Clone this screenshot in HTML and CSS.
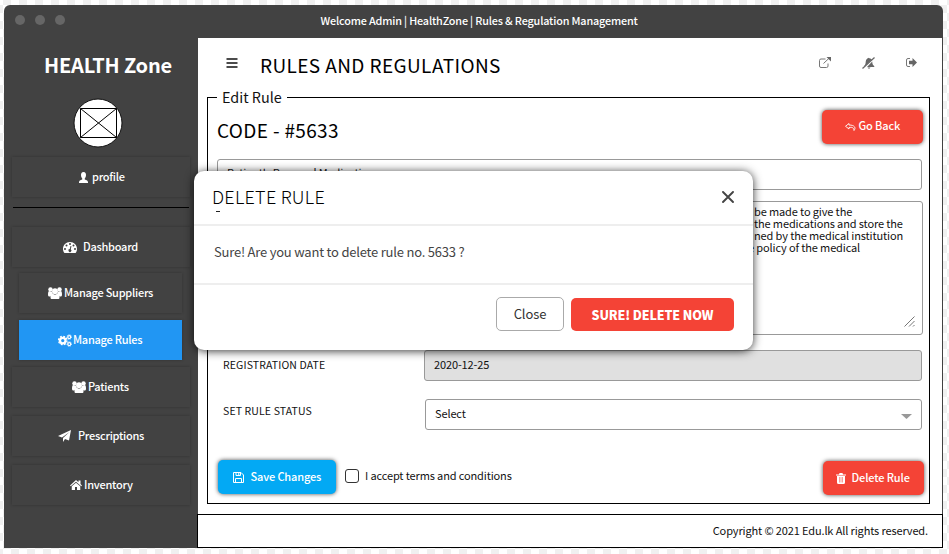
FILE: index.html
```html
<!DOCTYPE html>
<html lang="en">
<head>
<meta charset="utf-8">
<title>Rules &amp; Regulation Management</title>
<link rel="stylesheet" href="styles.css">
</head>
<body>
<svg class="defs" width="0" height="0">
  <symbol id="users" viewBox="0 0 28 24"><circle cx="5" cy="5" r="4.500"/><circle cx="23" cy="5" r="4.500"/><path d="M0 15c0-5 1-7 3-7 2 2 5 2 6 1-1 4 1 6 2 7-3 0-5 1-6 3H3c-2 0-3-1-3-4zM28 15c0-5-1-7-3-7-2 2-5 2-6 1 1 4-1 6-2 7 3 0 5 1 6 3h2c2 0 3-1 3-4z"/><circle cx="14" cy="8.500" r="5.800"/><path d="M5 21c0-6 2-8 4-8 3 3 7 3 10 0 3 0 4 3 4 8 0 2-1 3-3 3H8c-2 0-3-1-3-3z"/></symbol>
</svg>
<div class="window">
  <header class="titlebar">
    <div class="dots"><i></i><i></i><i></i></div>
    <span class="title">Welcome Admin | HealthZone | Rules &amp; Regulation Management</span>
  </header>
  <div class="shell">
    <nav class="sidebar">
      <h1 class="brand">HEALTH Zone</h1>
      <svg class="avatar" viewBox="0 0 50 50"><circle cx="25" cy="25" r="24" fill="#fff" stroke="#111"/><path d="M7.500 10.500h36v29h-36zM7.500 10.500l36 29M43.500 10.500l-36 29" fill="none" stroke="#000"/></svg>
      <a class="item profile"><svg class="ic" width="9" height="11" viewBox="0 0 18 22"><path d="M9 0c4 0 5 3 5 6s-1 5-2.500 7v2c4 1 6.500 2 6.500 6v1H0v-1c0-4 2.500-5 6.500-6v-2C5 11 4 9 4 6s1-6 5-6z"/></svg><span>profile</span></a>
      <hr class="rule">
      <a class="item dash"><svg class="ic" width="14" height="11" viewBox="0 0 28 22"><path fill-rule="evenodd" d="M14 0C6 0 0 6 0 14c0 3 1 5 2 7l1 1h22l1-1c1-2 2-4 2-7C28 6 22 0 14 0zM4 12a2 2 0 1 1 0 4 2 2 0 0 1 0-4zM7 5a2 2 0 1 1 0 4 2 2 0 0 1 0-4zM14 2a2 2 0 1 1 0 4 2 2 0 0 1 0-4zM21 5a2 2 0 1 1 0 4 2 2 0 0 1 0-4zM24 12a2 2 0 1 1 0 4 2 2 0 0 1 0-4zM15 8l2 .5-1.500 6a3 3 0 1 1-2-.5z"/></svg><span>Dashboard</span></a>
      <a class="item narrow sup"><svg class="ic" width="14" height="12"><use href="#users"/></svg><span>Manage Suppliers</span></a>
      <a class="item narrow active"><svg class="ic" width="14" height="13" viewBox="0 0 28 26"><circle cx="9.500" cy="13" r="5.500" fill="none" stroke="#fff" stroke-width="4.500"/><circle cx="9.500" cy="13" r="8.500" fill="none" stroke="#fff" stroke-width="2.500" stroke-dasharray="3.700 2.970"/><circle cx="22.500" cy="6" r="3" fill="none" stroke="#fff" stroke-width="2.500"/><circle cx="22.500" cy="6" r="4.700" fill="none" stroke="#fff" stroke-width="1.500" stroke-dasharray="2 1.690"/><circle cx="22.500" cy="20" r="3" fill="none" stroke="#fff" stroke-width="2.500"/><circle cx="22.500" cy="20" r="4.700" fill="none" stroke="#fff" stroke-width="1.500" stroke-dasharray="2 1.690"/></svg><span>Manage Rules</span></a>
      <a class="item pat"><svg class="ic" width="14" height="12"><use href="#users"/></svg><span>Patients</span></a>
      <a class="item pre"><svg class="ic" width="13" height="12" viewBox="0 0 26 24"><path d="M26 0L22 21l-8-3-4 6v-8L23 4 8 15 0 12z"/></svg><span>Prescriptions</span></a>
      <a class="item inv"><svg class="ic" width="12" height="10" viewBox="0 0 24 20"><path d="M12 0l5 4.500V1h4v7l3 3-1.500 1.500L12 3.500 1.500 12.500 0 11zM12 5.500l8.500 7.200V20H14v-6h-4v6H3.500v-7.300z"/></svg><span>Inventory</span></a>
    </nav>
    <main class="main">
      <div class="topbar">
        <svg class="burger" width="12" height="10" viewBox="0 0 12 10"><path d="M.5 1h11M.5 5h11M.5 9h11" stroke="#111" stroke-width="1.700"/></svg>
        <h2 class="page-title">RULES AND REGULATIONS</h2>
        <div class="tools">
          <svg width="12" height="11" viewBox="0 0 24 22" fill="none" stroke="#777" stroke-width="2"><path d="M13 4H4Q1 4 1 7v11q0 3 3 3h11q3 0 3-3v-5M9 13L20 2.500"/><path d="M15 0h9v9z" fill="#666" stroke="none"/></svg>
          <svg width="13" height="12" viewBox="0 0 26 24" fill="#666"><path d="M4 18c3-2 3-5 3.500-9C8 5 10 3 12 2.500 12 1 14 1 14 2.500c3 0 4.500 1 5.500 3L6 18zM20.500 9c0 4 1 7 4 9v2H10zM11 21h6c-1 3-5 3-6 0z"/><path d="M25 1L1 23" stroke="#666" stroke-width="2.500"/></svg>
          <svg width="11" height="9" viewBox="0 0 22 18"><path d="M8 1H4Q1 1 1 4v10q0 3 3 3h4" fill="none" stroke="#777" stroke-width="2"/><path d="M6 5.500h7V0l9 9-9 9v-5.500H6z" fill="#666"/></svg>
        </div>
      </div>
      <section class="panel">
        <span class="legend">Edit Rule</span>
        <div class="code-row">
          <h3 class="code">CODE - #5633</h3>
          <button class="btn red back"><svg width="11" height="8" viewBox="0 0 22 16" fill="none" stroke="#fff" stroke-width="1.800"><path d="M8 1L1 6.500 8 12V9c7-1 9 0 10 6 4-5 2-11-10-11z"/></svg><span>Go Back</span></button>
        </div>
        <div class="field name"><span>Patient's Personal Medication</span></div>
        <div class="field area">
          <p>be made to give the</p><p>the medications and store the</p><p>ned by the medical institution</p><p class="wide">e policy of the medical</p>
          <svg class="grip" width="11" height="11" viewBox="0 0 11 11"><path d="M.5 10.500l10-10M5 10.500l5.500-5.500M9 10.500l1.500-1.500" stroke="#777"/></svg>
        </div>
        <div class="row date"><label>REGISTRATION DATE</label><div class="field grey"><span>2020-12-25</span></div></div>
        <div class="row status"><label>SET RULE STATUS</label><div class="field select"><span>Select</span><svg width="11" height="5" viewBox="0 0 11 5"><path d="M0 0h11L5.500 5z" fill="#999"/></svg></div></div>
        <div class="actions">
          <button class="btn blue"><svg width="11" height="11" viewBox="0 0 22 22" fill="none" stroke="#fff" stroke-width="2"><path d="M1 1h15l5 5v15H1zM5 21v-8h12v8M6 1v6h9V1M11.500 2v4"/></svg><span>Save Changes</span></button>
          <i class="check"></i><span class="terms">I accept terms and conditions</span>
          <button class="btn red del"><svg width="10" height="11" viewBox="0 0 20 22"><path fill="#fff" fill-rule="evenodd" d="M0 3h6l1-3h6l1 3h6v2H0zM2 6h16v13q0 3-3 3H5q-3 0-3-3zM6 8v11h1V8zM9.500 8v11h1V8zM13 8v11h1V8z"/></svg><span>Delete Rule</span></button>
        </div>
      </section>
      <footer class="footer"><span>Copyright © 2021 Edu.lk All rights reserved.</span></footer>
    </main>
  </div>
</div>
<div class="modal">
  <div class="mhead"><div class="mtitle"><h4>DELETE RULE</h4><i class="dash-mark"></i></div><svg width="12" height="12" viewBox="0 0 12 12"><path d="M1 1l10 10M11 1L1 11" stroke="#444" stroke-width="1.900" stroke-linecap="round"/></svg></div>
  <div class="mbody"><span>Sure! Are you want to delete rule no. 5633 ?</span></div>
  <div class="mfoot"><button class="close"><span>Close</span></button><button class="sure"><span>SURE! DELETE NOW</span></button></div>
</div>
</body>
</html>
```
FILE: styles.css
```css
* { box-sizing: border-box; }
body {
  margin: 0; width: 949px; height: 554px; padding: 5px 0 0 4px; overflow: hidden; position: relative;
  font-family: "Noto Sans CJK SC", sans-serif; font-size: 11px; line-height: 16px; color: #111;
  letter-spacing: -.13px;
  background: conic-gradient(#f0f0f0 25%, #fff 0 50%, #f0f0f0 0 75%, #fff 0) 3px 5px / 16px 16px;
}
.defs { position: absolute; }
h1, h2, h3, h4, p { margin: 0; font-weight: 400; }
span, h1, h2, h3, h4, label, p { white-space: nowrap; }
button { font: inherit; letter-spacing: inherit; border: 0; padding: 0; }
svg { display: block; flex: none; }
.window { width: 939px; height: 543px; border-radius: 6px 6px 0 0; overflow: hidden; background: #424242; }
.titlebar { height: 33px; display: flex; align-items: center; color: #fff; font-weight: 500; }
.dots { display: flex; gap: 10px; padding: 0 0 3px 11px; width: 316.500px; }
.dots i { width: 10px; height: 10px; border-radius: 50%; background: #666; }
.titlebar .title { font-size: 10.800px; letter-spacing: -.15px; padding-bottom: 4px; }
.shell { display: flex; height: 510px; }
.sidebar { width: 194px; padding: 12px 0 0 8px; color: #fff; display: flex; flex-direction: column; }
.brand { font-size: 20px; line-height: 30px; font-weight: 700; padding-left: 32px; letter-spacing: -.2px; }
.avatar { width: 50px; height: 50px; margin: 18px 0 9px 61.400px; }
.item { height: 40px; width: 178px; flex: none; display: flex; align-items: center; gap: 4px; font-weight: 500; letter-spacing: -.26px; box-shadow: 0 0 3px rgba(0,0,0,.25); background: #424242; }
.item span, .btn span { padding-bottom: 3px; }
.ic { fill: #fff; }
.narrow { width: 163px; margin-left: 7px; }
.profile { padding-left: 67px; }
.rule { width: 176px; height: 1px; background: #000; border: 0; margin: 10px 0 19px 1px; flex: none; }
.dash { padding-left: 51px; gap: 6px; }
.sup { margin-top: 6px; padding-left: 29px; gap: 2px; }
.active { margin-top: 7px; padding-left: 39px; gap: 1px; background: #2196f3; }
.pat { margin-top: 7px; padding-left: 60px; gap: 2px; }
.pre { margin-top: 9px; padding-left: 46px; gap: 7px; }
.inv { margin-top: 9px; padding-left: 58px; gap: 2px; }
.main { width: 745px; background: #fff; border-right: 1px solid #424242; display: flex; flex-direction: column; }
.topbar { height: 59px; display: flex; align-items: center; padding: 0 25px 3px 28px; }
.topbar .burger { margin-top: -7px; }
.page-title { font-size: 19px; line-height: 28px; margin: -2px 0 0 22px; letter-spacing: .4px; color: #000; }
.tools { margin-left: auto; display: flex; align-items: center; gap: 31px; margin-top: -7px; }
.panel { position: relative; border: 1px solid #000; margin-left: 9px; width: 723px; height: 407px; padding: 11px 7px 0 9px; }
.legend { position: absolute; left: 9px; top: -11px; background: #fff; padding: 0 5px; font-size: 14.400px; line-height: 20px; letter-spacing: 0; }
.code-row { display: flex; justify-content: space-between; height: 34px; }
.code { font-size: 19px; line-height: 42px; letter-spacing: .35px; color: #000; }
.btn { display: flex; align-items: center; color: #fff; font-weight: 500; border-radius: 5px; box-shadow: 0 0 4px rgba(0,0,0,.7); height: 34px; }
.red { background: #f44336; }
.blue { background: #03a9f4; width: 118px; padding-left: 15px; gap: 7px; letter-spacing: -.15px; }
.back { width: 101px; padding-left: 23px; gap: 3px; }
.code-row .back { position: relative; left: .5px; top: .5px; }
.field { border: 1px solid #999; border-radius: 3px; background: #fff; }
.name { width: 705px; height: 31px; margin-top: 16px; padding: 4px 9px; }
.area { width: 706px; height: 134px; margin-top: 11px; position: relative; padding: 3px 0 0 536px; line-height: 12px; }
.area p { height: 12px; }
.area .wide { margin-left: -6px; }
.grip { position: absolute; right: 7px; bottom: 7px; }
.row { display: flex; padding-left: 6px; }
.row label { width: 201px; font-size: 10.500px; padding-top: 7px; letter-spacing: .12px; }
.row .field { width: 498px; height: 31px; padding: 5px 9px; }
.date { margin-top: 15px; }
.grey { background: #e0e0e0; }
.status { margin-top: 18px; }
.row.status label { width: 202px; padding-top: 4px; }
.row .select { width: 497px; display: flex; justify-content: space-between; align-items: center; }
.select span { padding-bottom: 3px; }
.select svg { margin-top: 4px; }
.actions { display: flex; margin-top: 29px; align-items: center; }
.check { width: 14px; height: 14px; border: 1.500px solid #333; border-radius: 3px; margin: -2px 6px 0 10px; }
.actions .blue { position: relative; left: .5px; }
.terms { padding-bottom: 4px; }
.del { margin: 2px 0 0 auto; width: 101px; padding-left: 13px; gap: 6px; }
.actions .red { position: relative; left: 1.500px; }
.footer { margin: auto -1px 0; height: 34px; border: 1px solid #000; display: flex; align-items: center; justify-content: flex-end; padding: 0 14px 2px 0; }
.modal { position: absolute; left: 194px; top: 171px; width: 559px; height: 179px; background: #fff; border-radius: 10px; box-shadow: 0 1px 10px rgba(0,0,0,.8); }
.mhead { height: 55px; border-bottom: 2px solid #eee; display: flex; justify-content: space-between; padding: 12px 19px 0 18px; }
.mhead svg { margin-top: 8px; }
.mtitle h4 { font-size: 18px; line-height: 26px; font-weight: 300; letter-spacing: .25px; color: #000; }
.dash-mark { display: block; width: 4px; height: 1px; background: #222; margin: 2px 0 0 4px; }
.mbody { height: 59px; border-bottom: 2px solid #eee; padding: 17px 20px; font-size: 13px; line-height: 18px; color: #444; letter-spacing: -.21px; }
.mfoot { display: flex; justify-content: flex-end; gap: 7px; padding: 12px 19px 0 0; }
.close { width: 68px; height: 34px; border: 1px solid #aaa; border-radius: 5px; background: #fff; font-size: 13px; color: #333; letter-spacing: -.1px; }
.sure { width: 163px; height: 33px; border-radius: 5px; background: #f44336; color: #fff; font-weight: 900; font-size: 12.500px; letter-spacing: -.15px; margin-top: 1px; }
```
